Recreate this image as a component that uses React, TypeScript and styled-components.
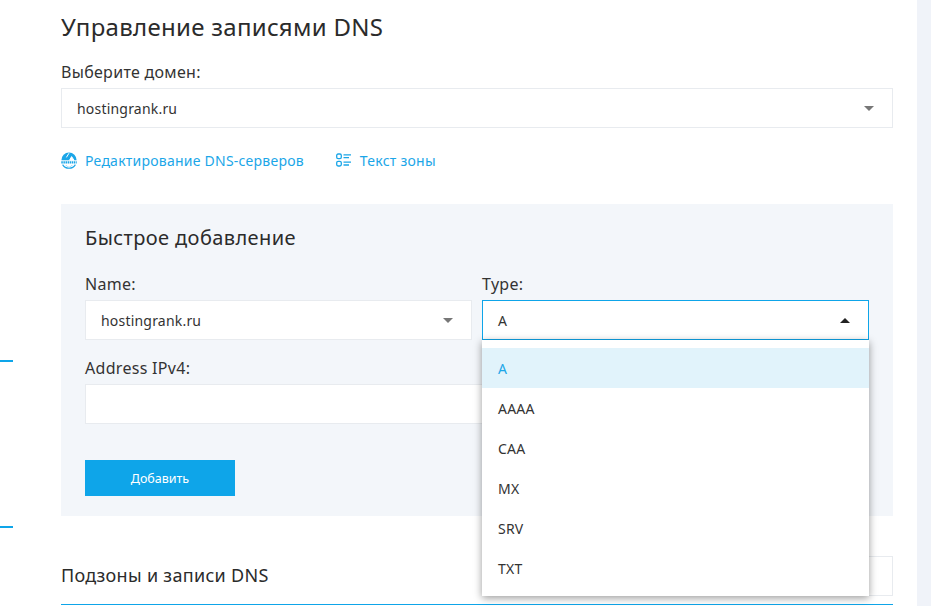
import React from 'react';
import styled, { createGlobalStyle } from 'styled-components';

const GlobalStyle = createGlobalStyle`
  html, body {
    margin: 0;
    padding: 0;
    height: 100%;
    overflow: hidden;
    background: #fff;
  }
  body {
    font-family: "Noto Sans", "Open Sans", sans-serif;
    color: #333;
  }
`;

const Page = styled.div`
  display: flex;
  width: 931px;
  height: 606px;
  overflow: hidden;
`;

const Rail = styled.div`
  width: 61px;
  flex: none;
  display: flex;
  flex-direction: column;
  padding-top: 360px;
  gap: 164px;
  box-sizing: border-box;
`;

const Tick = styled.div`
  width: 13px;
  height: 2px;
  background: #0ea5e9;
`;

const Main = styled.main`
  width: 832px;
  flex: none;
`;

const Aside = styled.div`
  width: 14px;
  margin-left: 24px;
  flex: none;
  background: #f0f3f9;
`;

const Title = styled.h1`
  margin: 0;
  padding-top: 12px;
  height: 46px;
  box-sizing: border-box;
  font-size: 24px;
  line-height: 30px;
  font-weight: 400;
  letter-spacing: 0.3px;
  color: #2b2b2b;
`;

const Label = styled.label`
  display: block;
  font-size: 16px;
  line-height: 20px;
  letter-spacing: 0.3px;
  margin-bottom: 6px;
  color: #333;
`;

const DomainField = styled.div`
  padding-top: 16px;
`;

const SelectBox = styled.div<{ $open?: boolean }>`
  position: relative;
  height: 40px;
  box-sizing: border-box;
  display: flex;
  align-items: center;
  justify-content: space-between;
  padding: 0 18px 0 15px;
  background: #fff;
  border: 1px solid ${p => (p.$open ? '#0ea5e9' : '#e8ebef')};
  font-size: 14px;
  letter-spacing: 0.2px;
  color: #333;
`;

const Caret = styled.span<{ $open?: boolean }>`
  width: 0;
  height: 0;
  border-left: 5.5px solid transparent;
  border-right: 5.5px solid transparent;
  ${p =>
    p.$open
      ? 'border-bottom: 5px solid #222;'
      : 'border-top: 5px solid #777;'}
`;

const Links = styled.div`
  display: flex;
  align-items: center;
  gap: 32px;
  height: 64px;
  box-sizing: border-box;
  margin-bottom: 12px;
`;

const LinkItem = styled.a`
  display: flex;
  align-items: center;
  gap: 8px;
  font-size: 14px;
  letter-spacing: 0.24px;
  color: #1ba6e8;
  text-decoration: none;
`;

const Panel = styled.section`
  position: relative;
  height: 312px;
  box-sizing: border-box;
  padding: 20px 24px;
  background: #f3f6fa;
`;

const PanelTitle = styled.h2`
  margin: 0 0 22px;
  font-size: 20px;
  line-height: 28px;
  font-weight: 400;
  letter-spacing: 0.4px;
  color: #2b2b2b;
`;

const Row = styled.div`
  display: grid;
  grid-template-columns: 387px 387px;
  gap: 10px;
  margin-bottom: 18px;
`;

const Field = styled.div<{ $wide?: boolean }>`
  position: relative;
  min-width: 0;
  grid-column: ${p => (p.$wide ? 'span 2' : 'auto')};
`;

const TextInput = styled.div`
  height: 40px;
  box-sizing: border-box;
  background: #fff;
  border: 1px solid #e8ebef;
`;

const AddButton = styled.button`
  display: block;
  width: 150px;
  height: 36px;
  margin-top: 36px;
  padding: 0;
  border: 0;
  background: #0ea5e9;
  color: #fff;
  font-family: inherit;
  font-size: 12.5px;
`;

const Dropdown = styled.ul`
  position: absolute;
  top: 39px;
  left: -1px;
  width: calc(100% + 2px);
  margin: 0;
  padding: 8px 0;
  box-sizing: border-box;
  list-style: none;
  background: #fff;
  box-shadow: 0 2px 8px rgba(0, 0, 0, 0.4);
  z-index: 5;
`;

const Option = styled.li<{ $active?: boolean }>`
  height: 40px;
  display: flex;
  align-items: center;
  padding-left: 16px;
  font-size: 14px;
  letter-spacing: 0.2px;
  color: ${p => (p.$active ? '#1ba6e8' : '#333')};
  background: ${p => (p.$active ? '#e1f3fb' : 'transparent')};
`;

const SectionHead = styled.div`
  display: flex;
  justify-content: space-between;
  align-items: center;
  height: 89px;
  box-sizing: border-box;
  padding: 40px 0 8px;
  border-bottom: 1px solid #0ea5e9;
`;

const SectionTitle = styled.h3`
  margin: 0;
  padding-bottom: 2px;
  font-size: 18px;
  line-height: 24px;
  font-weight: 400;
  letter-spacing: 0.3px;
  color: #2b2b2b;
`;

const SearchBox = styled.div`
  width: 300px;
  height: 40px;
  box-sizing: border-box;
  background: #fff;
  border: 1px solid #e8ebef;
`;

const GlobeIcon = () => (
  <svg width="16" height="17" viewBox="0 0 16 17" fill="none">
    <path d="M0.4 8.2A7.6 7.6 0 0 1 15.6 8.2H0.4Z" fill="#1ba6e8" />
    <path d="M8 1.2L5.4 5.4M10.6 4.6L13 8.2 8.6 8.2Z" stroke="#fff" strokeWidth="1" fill="#fff" />
    <path d="M0.3 10.4H15.7" stroke="#1ba6e8" strokeWidth="2.4" strokeDasharray="1.5 0.6" />
    <path d="M1.6 12.6C3 15 5.4 16.2 8 16.2S13 15 14.4 12.6" stroke="#1ba6e8" strokeWidth="1.1" />
    <path d="M5 13.2C6 14.6 7 15.2 8 15.2S10 14.6 11 13.2" stroke="#8fd3f4" strokeWidth="1" />
  </svg>
);

const ListIcon = () => (
  <svg width="16" height="16" viewBox="0 0 16 16" fill="none" stroke="#1ba6e8">
    <rect x="0.7" y="2" width="4.6" height="4.6" rx="1.4" strokeWidth="1.3" />
    <rect x="0.7" y="9.4" width="4.6" height="4.6" rx="1.4" strokeWidth="1.3" />
    <path d="M7.5 2.8H15M7.5 5.6H13M7.5 10.2H15M7.5 13H13" strokeWidth="1.3" />
  </svg>
);

const recordTypes = ['A', 'AAAA', 'CAA', 'MX', 'SRV', 'TXT'];

export default function App() {
  return (
    <Page>
      <GlobalStyle />
      <Rail>
        <Tick />
        <Tick />
      </Rail>
      <Main>
        <Title>Управление записями DNS</Title>
        <DomainField>
          <Label>Выберите домен:</Label>
          <SelectBox>
            hostingrank.ru
            <Caret />
          </SelectBox>
        </DomainField>
        <Links>
          <LinkItem>
            <GlobeIcon />
            Редактирование DNS-серверов
          </LinkItem>
          <LinkItem>
            <ListIcon />
            Текст зоны
          </LinkItem>
        </Links>
        <Panel>
          <PanelTitle>Быстрое добавление</PanelTitle>
          <Row>
            <Field>
              <Label>Name:</Label>
              <SelectBox>
                hostingrank.ru
                <Caret />
              </SelectBox>
            </Field>
            <Field>
              <Label>Type:</Label>
              <SelectBox $open>
                A
                <Caret $open />
                <Dropdown>
                  {recordTypes.map(t => (
                    <Option key={t} $active={t === 'A'}>
                      {t}
                    </Option>
                  ))}
                </Dropdown>
              </SelectBox>
            </Field>
          </Row>
          <Row>
            <Field $wide>
              <Label>Address IPv4:</Label>
              <TextInput />
            </Field>
          </Row>
          <AddButton>Добавить</AddButton>
        </Panel>
        <SectionHead>
          <SectionTitle>Подзоны и записи DNS</SectionTitle>
          <SearchBox />
        </SectionHead>
      </Main>
      <Aside />
    </Page>
  );
}
